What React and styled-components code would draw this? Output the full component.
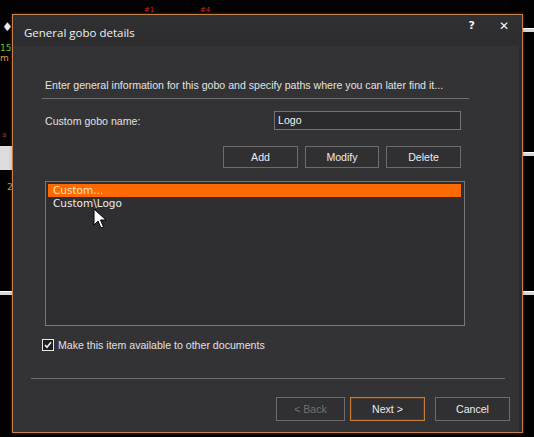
import React from 'react'
import styled, { createGlobalStyle } from "styled-components";

const Global = createGlobalStyle`
  html, body { margin: 0; padding: 0; background: #000; }
  body { width: 534px; height: 437px; overflow: hidden; font-family: "Liberation Sans", Arial, sans-serif; }
`;

const Desktop = styled.div`
  position: relative;
  width: 534px;
  height: 437px;
  background: #020202;
  overflow: hidden;
`;

const Mark = styled.span`
  position: absolute;
  font-family: "DejaVu Sans", sans-serif;
  font-size: ${p => p.size || 9}px;
  color: ${p => p.color};
  line-height: 1;
`;

const Rail = styled.div`
  position: absolute;
  height: 3px;
  background: #d8d8d8;
  border-top: 1px solid #fff;
`;

const Chip = styled.div`
  position: absolute;
  left: 0;
  top: 146px;
  width: 12px;
  height: 24px;
  background: #dcdcdc;
`;

const Dialog = styled.div`
  position: absolute;
  left: 12px;
  top: 14px;
  width: 509px;
  height: 417px;
  border: 1px solid #c1824f;
  box-shadow: 0 0 3px rgba(190, 110, 60, 0.5), inset -3px 0 0 #2a2a2c;
  background: #333335;
  display: flex;
  flex-direction: column;
  color: #e4e4e4;
`;

const TitleBar = styled.div`
  height: 31px;
  display: flex;
  align-items: center;
  justify-content: space-between;
  padding: 0 13px 0 11px;
  background: linear-gradient(#303032, #2d2d2f);
`;

const Title = styled.div`
  font-family: "Open Sans", sans-serif;
  font-size: 11.5px;
  color: #f0f0f0;
  margin-top: 4px;
`;

const Controls = styled.div`
  display: flex;
  gap: 24px;
  align-items: center;
  margin-top: -10px;
`;

const Ctl = styled.span`
  font-family: "DejaVu Sans", sans-serif;
  font-weight: bold;
  font-size: ${p => p.size}px;
  color: #f4f4f4;
`;

const Body = styled.div`
  display: flex;
  flex-direction: column;
  padding: 0 0 0 32px;
`;

const Intro = styled.div`
  font-size: 10.6px;
  color: #e2e2e2;
  margin-top: 32px;
  height: 14px;
  line-height: 14px;
`;

const Rule = styled.div`
  height: 1px;
  background: #6e6e70;
  width: ${p => p.w}px;
  margin: ${p => p.m};
`;

const NameRow = styled.div`
  display: flex;
  align-items: center;
  justify-content: space-between;
  width: 416px;
  margin-top: 12px;
`;

const Label = styled.span`
  font-size: 10.6px;
  color: #e0e0e0;
`;

const Field = styled.div`
  width: 182px;
  height: 17px;
  border: 1px solid #747476;
  background: #2b2b2d;
  font-size: 10.6px;
  color: #f2f2f2;
  line-height: 17px;
  padding-left: 3px;
`;

const ActionRow = styled.div`
  display: flex;
  justify-content: flex-end;
  gap: 7px;
  width: 416px;
  margin-top: 16px;
`;

const Btn = styled.div`
  width: ${p => p.w || 73}px;
  height: ${p => p.h || 20}px;
  box-sizing: content-box;
  border: 1px solid ${p => (p.focus ? "#c77c3c" : "#6c6c6e")};
  box-shadow: ${p => (p.focus ? "inset 0 0 0 1px #5a3a1e" : "none")};
  background: #303032;
  color: ${p => (p.off ? "#707072" : "#ececec")};
  font-size: 10.6px;
  display: flex;
  align-items: center;
  justify-content: center;
`;

const List = styled.div`
  position: relative;
  width: 414px;
  height: 139px;
  margin-top: 13px;
  border: 1px solid #78787a;
  background: #2f2f31;
  padding: 2px;
  box-sizing: content-box;
  font-family: "DejaVu Sans", sans-serif;
  font-size: 10.5px;
`;

const Item = styled.div`
  height: 13px;
  line-height: 13px;
  padding-left: 5px;
  width: 408px;
  background: ${p => (p.sel ? "#ff6a00" : "transparent")};
  color: ${p => (p.sel ? "#ffe2c8" : "#ececec")};
`;

const Pointer = styled.svg`
  position: absolute;
  left: 47px;
  top: 26px;
`;

const CheckRow = styled.div`
  display: flex;
  align-items: center;
  gap: 4px;
  margin: 13px 0 0 -3px;
`;

const Box = styled.div`
  width: 10px;
  height: 10px;
  border: 1px solid #e8e8e8;
  background: #1e1e1e;
  display: flex;
  align-items: center;
  justify-content: center;
`;

const Footer = styled.div`
  display: flex;
  justify-content: flex-end;
  gap: 6px;
  padding-right: 12px;
  margin-top: 18px;
`;

const App = () => {
  return (
    <>
      <Global />
      <Desktop>
        <Mark color="#d02a20" size={7} style={{ left: 144, top: 7 }}>#1</Mark>
        <Mark color="#d02a20" size={7} style={{ left: 200, top: 7 }}>#4</Mark>
        <Mark color="#ececec" size={12} style={{ left: 2, top: 21 }}>♦</Mark>
        <Mark color="#6bbf2a" size={9} style={{ left: 0, top: 44 }}>15</Mark>
        <Mark color="#e0a030" size={9} style={{ left: 0, top: 54 }}>m</Mark>
        <Mark color="#c02a20" size={7} style={{ left: 2, top: 132 }}>a</Mark>
        <Chip />
        <Mark color="#d09030" size={9} style={{ left: 7, top: 183 }}>2</Mark>
        <Rail style={{ left: 0, top: 291, width: 12 }} />
        <Rail style={{ left: 522, top: 28, width: 12 }} />
        <Rail style={{ left: 522, top: 152, width: 12 }} />
        <Rail style={{ left: 522, top: 291, width: 12 }} />

        <Dialog>
          <TitleBar>
            <Title>General gobo details</Title>
            <Controls>
              <Ctl size={11}>?</Ctl>
              <Ctl size={12}>✕</Ctl>
            </Controls>
          </TitleBar>
          <Body>
            <Intro>Enter general information for this gobo and specify paths where you can later find it...</Intro>
            <Rule w={427} m="6px 0 0 -3px" />
            <NameRow>
              <Label>Custom gobo name:</Label>
              <Field>Logo</Field>
            </NameRow>
            <ActionRow>
              <Btn>Add</Btn>
              <Btn w={72}>Modify</Btn>
              <Btn>Delete</Btn>
            </ActionRow>
            <List>
              <Item sel>Custom...</Item>
              <Item>Custom\Logo</Item>
              <Pointer width="14" height="22" viewBox="0 0 14 22">
                <path d="M1 1 L1 17 L5 13 L8 20 L10.5 19 L7.5 12 L13 12 Z" fill="#fff" stroke="#000" strokeWidth="1" />
              </Pointer>
            </List>
            <CheckRow>
              <Box>
                <svg width="8" height="8" viewBox="0 0 8 8">
                  <path d="M1 4 L3 6.3 L7 1.2" fill="none" stroke="#f2f2f2" strokeWidth="1.6" />
                </svg>
              </Box>
              <Label>Make this item available to other documents</Label>
            </CheckRow>
          </Body>
          <Rule w={474} m="27px 0 0 18px" />
          <Footer>
            <Btn w={67} h={22} off>&lt; Back</Btn>
            <Btn w={73} h={22} focus style={{ marginLeft: -1 }}>Next &gt;</Btn>
            <Btn w={73} h={22} style={{ marginLeft: 4 }}>Cancel</Btn>
          </Footer>
        </Dialog>
      </Desktop>
    </>
  )
}

export default App
